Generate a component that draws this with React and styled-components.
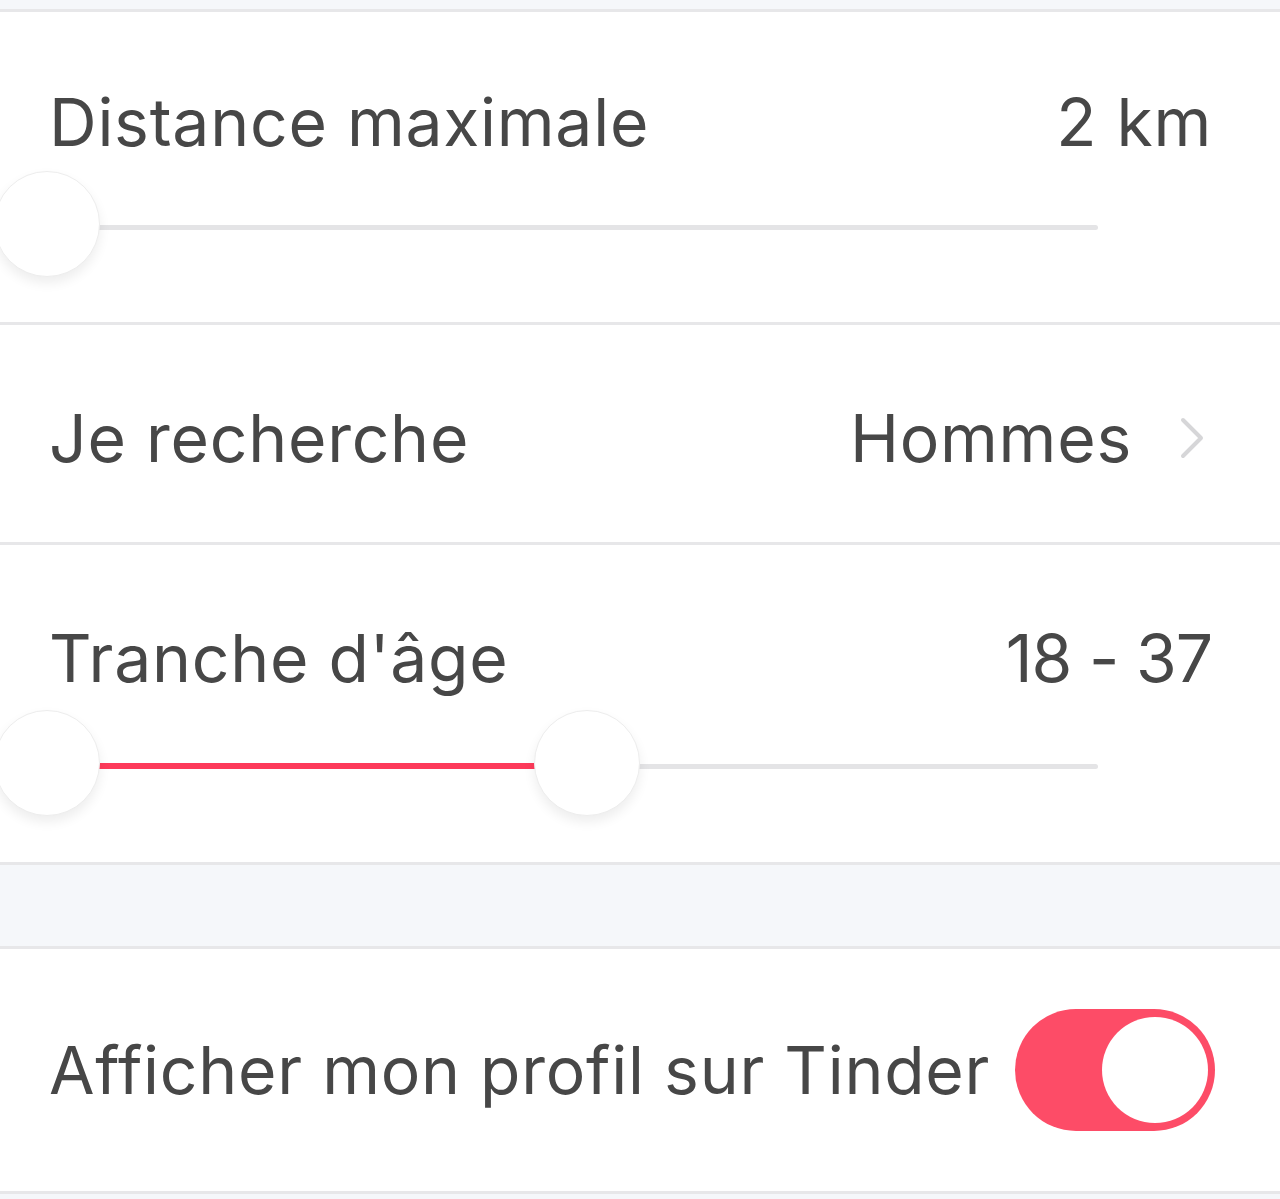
import React, { useState } from 'react';
import styled, { createGlobalStyle } from 'styled-components';

const GlobalStyle = createGlobalStyle`
  body {
    margin: 0;
    background-color: #f5f7fa;
    font-family: Inter, "Noto Sans", "Liberation Sans", sans-serif;
  }
`;

const Page = styled.div`
  padding: 9px 0 9px;
  display: flex;
  flex-direction: column;
  gap: 81px;
`;

const Group = styled.section`
  background-color: #fff;
  border-top: 3px solid #e7e7e9;
  border-bottom: 3px solid #e7e7e9;
`;

const Row = styled.div`
  padding: ${({ $pad }) => $pad || '70px 68px 45px 49px'};
  & + & {
    border-top: 3px solid #e7e7e9;
  }
`;

const Line = styled.div`
  display: flex;
  align-items: center;
  justify-content: space-between;
  font-size: 66px;
  line-height: 80px;
  letter-spacing: 0.75px;
  color: #474747;
`;

const Label = styled.span`
  white-space: nowrap;
`;

const Value = styled.span`
  display: flex;
  align-items: center;
  gap: 46px;
  white-space: nowrap;
  letter-spacing: ${({ $tight }) => ($tight ? '-1px' : 'inherit')};
`;

const Chevron = styled.svg`
  width: 28px;
  height: 44px;
  margin-right: 6px;
`;

const Slider = styled.div`
  position: relative;
  height: 106px;
  margin: ${({ $gap }) => $gap}px 114px 0 -2px;
`;

const Track = styled.div`
  position: absolute;
  left: 0;
  right: 0;
  top: 50%;
  height: 5px;
  margin-top: 1px;
  background-color: #e4e4e6;
  border-radius: 3px;
`;

const Fill = styled.div`
  position: absolute;
  top: 50%;
  height: 6px;
  margin-top: 0;
  background-color: #fd3a5a;
`;

const Thumb = styled.div`
  position: absolute;
  top: 0;
  width: 106px;
  height: 106px;
  margin-left: -53px;
  box-sizing: border-box;
  border-radius: 50%;
  background-color: #fff;
  border: 1px solid #ededed;
  box-shadow: 0 6px 12px rgba(0, 0, 0, 0.07);
`;

const Toggle = styled.button`
  width: 200px;
  height: 122px;
  padding: 8px 7px;
  border: none;
  border-radius: 61px;
  background-color: ${({ $on }) => ($on ? '#fd4c67' : '#e4e4e6')};
  display: flex;
  justify-content: ${({ $on }) => ($on ? 'flex-end' : 'flex-start')};
  cursor: pointer;
  flex-shrink: 0;
`;

const Knob = styled.span`
  width: 106px;
  height: 106px;
  border-radius: 50%;
  background-color: #fff;
`;

const pct = (v, min, max) => ((v - min) / (max - min)) * 100;

function RangeSlider({ min, max, values, gap }) {
  const points = values.map((v) => pct(v, min, max));
  const ranged = points.length > 1;
  return (
    <Slider $gap={gap}>
      <Track />
      {ranged && (
        <Fill style={{ left: `${points[0]}%`, width: `${points[1] - points[0]}%` }} />
      )}
      {points.map((p, i) => (
        <Thumb key={i} style={{ left: `${p}%` }} />
      ))}
    </Slider>
  );
}

export default function App() {
  const [visible, setVisible] = useState(true);
  return (
    <>
      <GlobalStyle />
      <Page>
        <Group>
          <Row>
            <Line>
              <Label>Distance maximale</Label>
              <Value>2 km</Value>
            </Line>
            <RangeSlider min={2} max={161} values={[2]} gap={9} />
          </Row>
          <Row $pad="73px 68px 64px 49px">
            <Line>
              <Label>Je recherche</Label>
              <Value>
                Hommes
                <Chevron viewBox="0 0 28 44">
                  <path d="M5 4 L23 22 L5 40" fill="none" stroke="#d6d6d8" strokeWidth="4" strokeLinecap="round" strokeLinejoin="round" />
                </Chevron>
              </Value>
            </Line>
          </Row>
          <Row $pad="73px 68px 46px 49px">
            <Line>
              <Label>Tranche d'âge</Label>
              <Value $tight>18 - 37</Value>
            </Line>
            <RangeSlider min={18} max={55} values={[18, 37]} gap={12} />
          </Row>
        </Group>
        <Group>
          <Row $pad="60px 65px 60px 49px">
            <Line>
              <Label>Afficher mon profil sur Tinder</Label>
              <Toggle $on={visible} onClick={() => setVisible(!visible)}>
                <Knob />
              </Toggle>
            </Line>
          </Row>
        </Group>
      </Page>
    </>
  );
}
